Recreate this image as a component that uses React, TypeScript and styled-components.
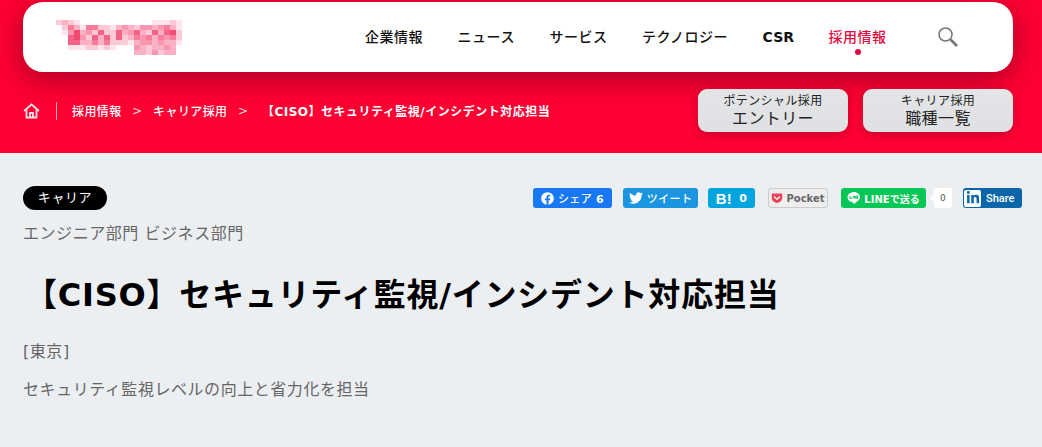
import React from "react";
import styled, { createGlobalStyle } from "styled-components";
import { FaFacebook, FaTwitter, FaLinkedinIn, FaGetPocket } from "react-icons/fa";

const Global = createGlobalStyle`
  html, body { margin: 0; padding: 0; background: #eceff2; overflow: hidden; }
  body { font-family: "DejaVu Sans", "Noto Sans CJK JP", sans-serif; letter-spacing: .025em; }
  * { box-sizing: border-box; }
`;
const Page = styled.div`width: 1042px; height: 447px; overflow: hidden; background: #eceff2;`;
const Hero = styled.header`
  height: 153px; padding: 2px 29px 0 23px; background: #ff0033;
  display: flex; flex-direction: column;
`;
const NavCard = styled.div`
  height: 70px; flex: none; background: #fff; border-radius: 20px; display: flex; align-items: center;
  padding: 0 54px 0 33px; justify-content: space-between;
  box-shadow: 0 6px 30px rgba(100, 0, 25, 0.6);
`;
const Nav = styled.nav`display: flex; align-items: center; gap: 34.5px;`;
const NavItem = styled.a<{ $active?: boolean }>`
  position: relative; font-size: 14px; font-weight: 500; line-height: 20px; margin-top: -1px; white-space: nowrap; letter-spacing: .5px;
  color: ${p => (p.$active ? "#e5083c" : "#111")};
  ${p => p.$active && `&::after { content: ""; position: absolute; left: 50%; bottom: -8px; width: 6px; height: 6px; margin-left: -3px; border-radius: 50%; background: #e5083c; }`}
`;
const NavLatin = styled(NavItem)`font-weight: 700; letter-spacing: 0;`;
const SearchButton = styled.span`display: flex; margin-left: 16px; color: #777;`;
const SubBar = styled.div`flex: 1; display: flex; align-items: center; justify-content: space-between; padding-bottom: 4px;`;
const Crumbs = styled.div`display: flex; align-items: center; color: #fff; font-size: 12px; font-weight: 500; white-space: nowrap;`;
const Divider = styled.span`width: 1px; height: 18px; background: #f7a9bb; margin: 0 15px 0 16px;`;
const Sep = styled.span`font-weight: 400; margin: 0 10.5px; font-size: 12px; color: #ffd5de;`;
const CurrentCrumb = styled.span`font-weight: 700; margin-left: 3px; letter-spacing: .5px;`;
const Entries = styled.div`display: flex; gap: 15px;`;
const Entry = styled.a`
  width: 150px; height: 43px; border-radius: 9px; text-align: center; color: #222;
  background: linear-gradient(180deg, #e4e5e7, #dfe0e3);
  box-shadow: 0 3px 9px rgba(100, 0, 25, 0.4);
  display: flex; flex-direction: column; align-items: center; padding-top: 5px;
`;
const EntrySmall = styled.span`font-size: 12px; line-height: 15px;`;
const EntryBig = styled.span`font-size: 16px; line-height: 20px;`;
const Main = styled.main`padding: 33px 20px 0 23px;`;
const TopRow = styled.div`display: flex; justify-content: space-between; align-items: center; height: 24px;`;
const Tag = styled.span`
  width: 84px; height: 24px; border-radius: 12px; background: #000; color: #fff; font-size: 13px; letter-spacing: .6px;
  display: flex; align-items: center; justify-content: center; padding-bottom: 3px;
`;
const Shares = styled.div`display: flex; align-items: center;`;
const Share = styled.a<{ $bg: string; $w: number; $ml: number }>`
  height: 20px; width: ${p => p.$w}px; margin-left: ${p => p.$ml}px; background: ${p => p.$bg};
  border-radius: 3px; color: #fff; font-size: 11px; font-weight: 500; display: flex; align-items: center; justify-content: center; gap: 4px; white-space: nowrap;
`;
const BoldCount = styled.b`font-weight: 700;`;
const HatenaMark = styled.b`font-family: "Liberation Sans", sans-serif; font-size: 15px; margin-right: 3px;`;
const PocketShare = styled(Share)`
  background: #eee; border: 1px solid #ccc; color: #666; font-size: 10px; font-weight: 700; gap: 3px; letter-spacing: 0;
  svg { color: #ee4056; }
`;
const LineShare = styled(Share)`font-size: 10px; font-weight: 700; letter-spacing: 0; gap: 3px;`;
const Count = styled.span`
  position: relative; width: 18px; height: 20px; background: #fff; border-radius: 2px; margin-left: 8px; font-size: 9px; color: #555;
  display: flex; align-items: center; justify-content: center;
  &::before { content: ""; position: absolute; left: -4px; top: 6px; border: 4px solid transparent; border-left: 0; border-right-color: #fff; }
`;
const LinkedIn = styled(Share)`justify-content: flex-start; gap: 0; font-family: Roboto, sans-serif; font-size: 11px; font-weight: 500; letter-spacing: 0; overflow: hidden; padding: 0 0 0 1px;`;
const LinkedInMark = styled.span`width: 17px; height: 17px; display: flex; align-items: center; justify-content: center; background: #fff; color: #0a66a8; margin-right: 5px; border-radius: 2px; font-size: 14px;`;
const Depts = styled.p`margin: 12px 0 0; font-size: 16px; line-height: 24px; color: #666; letter-spacing: .55px;`;
const Title = styled.h1`margin: 27px 0 0 2px; font-size: 32px; line-height: 44px; font-weight: 700; color: #000; white-space: nowrap; letter-spacing: .76px;`;
const Body = styled.p`margin: 0; font-size: 16px; line-height: 24px; color: #666; letter-spacing: .55px;`;
const Place = styled(Body)`margin-top: 23px;`;
const Lead = styled(Body)`margin-top: 14px;`;

const logoRows = [
  "232100000000000011121",
  "025315522134324434531",
  "014734262263463263672",
  "006742636262354535452",
  "006633535222134434331",
  "001112212100043233430",
  "000000000000033242330",
];

const Logo = () => (
  <svg width="126" height="35" viewBox="0 0 126 35" shapeRendering="crispEdges" aria-label="logo">
    {logoRows.flatMap((row, y) => [...row].map((d, x) => d === "0" ? null : (
      <rect key={`${x}-${y}`} x={x * 6} y={y * 5} width="6" height="5" fill="#f0144a" opacity={Number(d) / 9} />
    )))}
  </svg>
);

const Home = () => (
  <svg width="17" height="16" viewBox="0 0 17 16" fill="none" stroke="#ffdfe6" strokeWidth="1.8">
    <path d="M1 8 8.5 1.5 16 8" /><path d="M3.5 6.5V14.5H13.5V6.5" /><path d="M7 14.5V10H10V14.5" />
  </svg>
);

const Search = () => (
  <svg width="22" height="22" viewBox="0 0 22 22" fill="none" stroke="#777">
    <circle cx="8.5" cy="8.5" r="6.5" strokeWidth="1.6" /><path d="M13.5 13.5 20 20" strokeWidth="2.6" />
  </svg>
);

const LineBubble = () => (
  <svg width="14" height="14" viewBox="0 0 14 14">
    <path fill="#fff" d="M7 1C3.4 1 .5 3.3.5 6.2c0 2.6 2.3 4.7 5.4 5.1.5.1.4.5.3 1.2 0 .4.3.5.7.3 1.7-1 5.9-3.6 6.1-6.6C12.9 3.300 10.600 1 7 1Z" />
    <path fill="none" stroke="#06c755" strokeWidth="1" d="M3 4.800V7.500H4.800M6 4.800V7.500M7.400 7.500V4.800L9 7.500V4.800M11 4.800H10V7.500H11M10 6.100H11" />
  </svg>
);

export default function App() {
  return (
    <Page>
      <Global />
      <Hero>
        <NavCard>
          <Logo />
          <Nav>
            <NavItem>企業情報</NavItem>
            <NavItem>ニュース</NavItem>
            <NavItem>サービス</NavItem>
            <NavItem>テクノロジー</NavItem>
            <NavLatin>CSR</NavLatin>
            <NavItem $active>採用情報</NavItem>
            <SearchButton><Search /></SearchButton>
          </Nav>
        </NavCard>
        <SubBar>
          <Crumbs>
            <Home /><Divider />
            <span>採用情報</span><Sep>&gt;</Sep><span>キャリア採用</span><Sep>&gt;</Sep>
            <CurrentCrumb>【CISO】セキュリティ監視/インシデント対応担当</CurrentCrumb>
          </Crumbs>
          <Entries>
            <Entry><EntrySmall>ポテンシャル採用</EntrySmall><EntryBig>エントリー</EntryBig></Entry>
            <Entry><EntrySmall>キャリア採用</EntrySmall><EntryBig>職種一覧</EntryBig></Entry>
          </Entries>
        </SubBar>
      </Hero>
      <Main>
        <TopRow>
          <Tag>キャリア</Tag>
          <Shares>
            <Share $bg="#1877f2" $w={79} $ml={0}><FaFacebook size={13} /><span>シェア <BoldCount>6</BoldCount></span></Share>
            <Share $bg="#1b95e0" $w={75} $ml={11}><FaTwitter size={14} />ツイート</Share>
            <Share $bg="#00a4de" $w={47} $ml={10}><HatenaMark>B!</HatenaMark><BoldCount>0</BoldCount></Share>
            <PocketShare $bg="#eee" $w={60} $ml={13}><FaGetPocket size={12} />Pocket</PocketShare>
            <LineShare $bg="#06c755" $w={85} $ml={13}><LineBubble />LINEで送る</LineShare>
            <Count>0</Count>
            <LinkedIn $bg="#0a66a8" $w={59} $ml={11}><LinkedInMark><FaLinkedinIn /></LinkedInMark>Share</LinkedIn>
          </Shares>
        </TopRow>
        <Depts>エンジニア部門 ビジネス部門</Depts>
        <Title>【CISO】セキュリティ監視/インシデント対応担当</Title>
        <Place>[東京]</Place>
        <Lead>セキュリティ監視レベルの向上と省力化を担当</Lead>
      </Main>
    </Page>
  );
}
